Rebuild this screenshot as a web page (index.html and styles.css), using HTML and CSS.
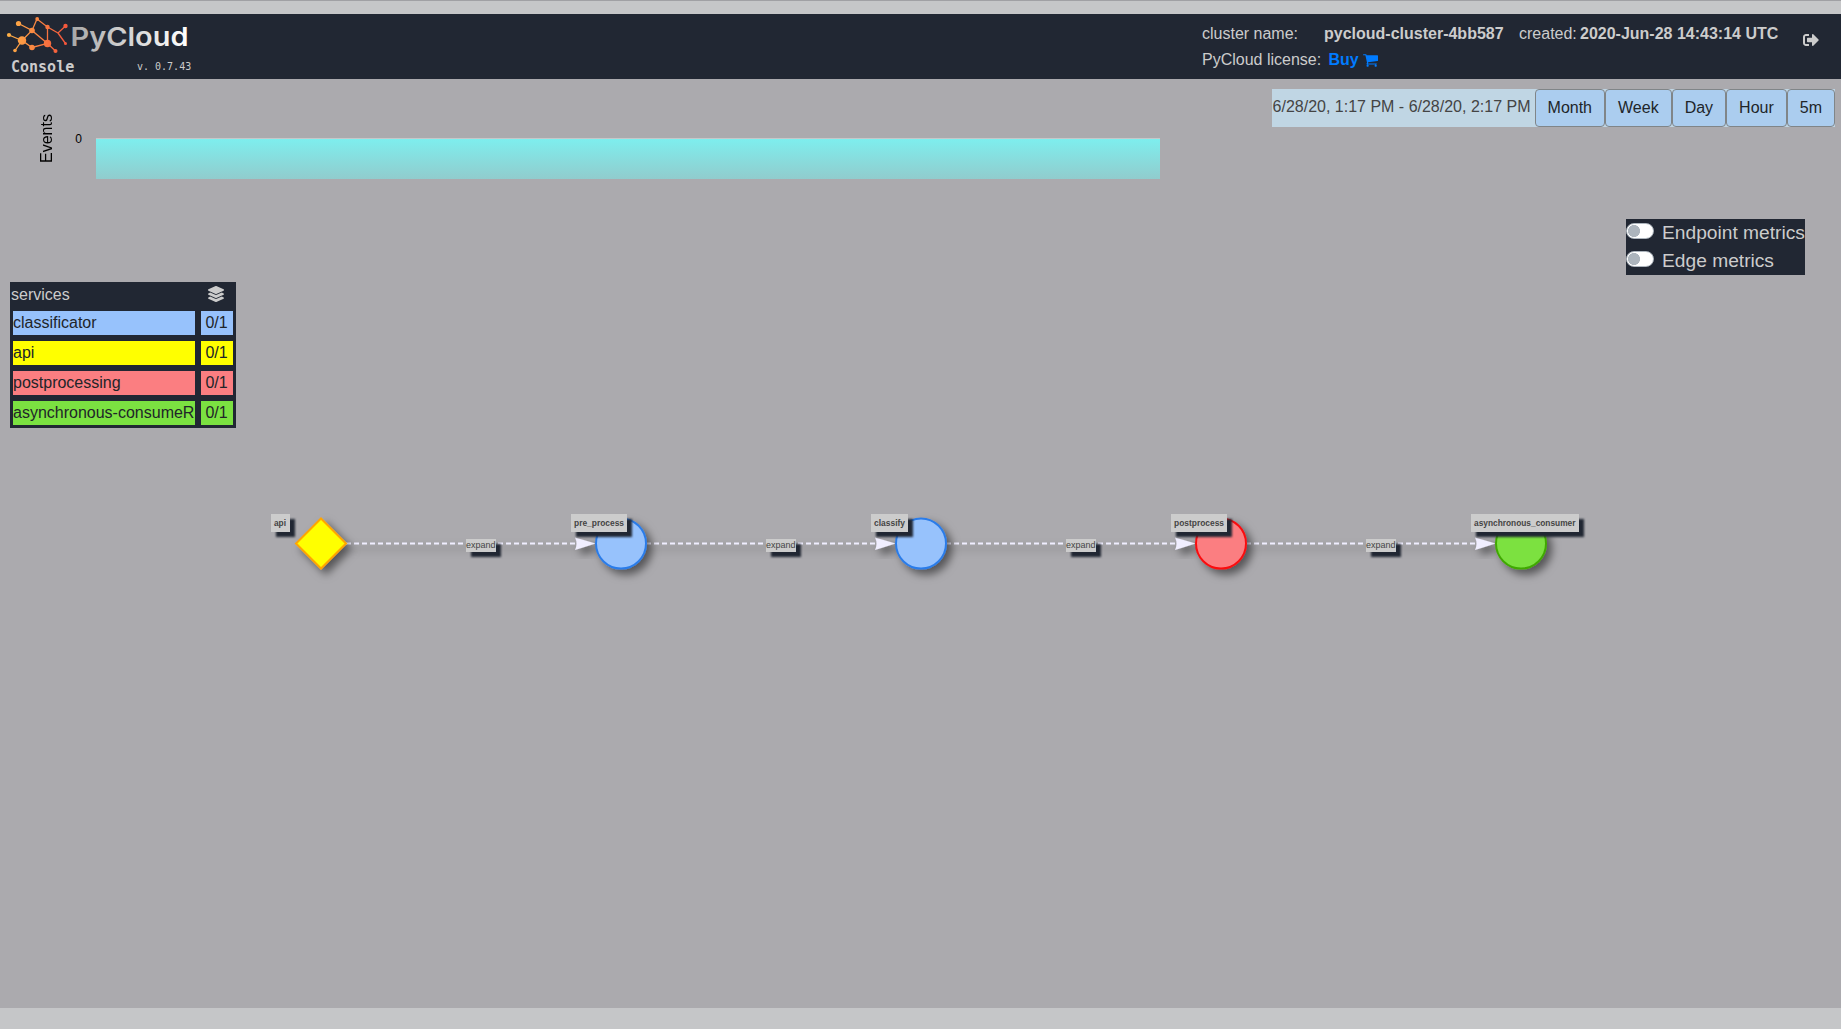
FILE: index.html
```html
<!DOCTYPE html>
<html lang="en">
<head>
<meta charset="utf-8">
<title>PyCloud Console</title>
<link rel="stylesheet" href="styles.css">
</head>
<body>
<header class="header">
  <div class="brand">
    <svg class="logo" width="190" height="40" viewBox="0 14 190 40">
      <defs>
        <linearGradient id="net" gradientUnits="userSpaceOnUse" x1="7" y1="30" x2="68" y2="38"><stop offset="0" stop-color="#ffb347"/><stop offset="1" stop-color="#f4523b"/></linearGradient>
        <linearGradient id="word" gradientUnits="userSpaceOnUse" x1="72" y1="0" x2="187" y2="0"><stop offset="0" stop-color="#a9a9a9"/><stop offset="1" stop-color="#fff"/></linearGradient>
      </defs>
      <path d="M18.5 23.5 32 30.5 22 40.5 9 35M15 50.5 22 40.5 32 47.5 47.5 43.5 32 30.5 37 19 47.5 27V43.5L55.5 51M47.5 27 58 33 65.500 26M58 33l7.500 10.500" fill="none" stroke="url(#net)" stroke-width="1.300"/>
      <g fill="url(#net)"><circle cx="18.500" cy="23.500" r="2.600"/><circle cx="9" cy="35" r="2.100"/><circle cx="15" cy="50.500" r="1.800"/><circle cx="22" cy="40.500" r="4.200"/><circle cx="32" cy="30.500" r="2.800"/><circle cx="32" cy="47.500" r="2.800"/><circle cx="37.200" cy="19" r="1.900"/><circle cx="47.500" cy="27" r="2.200"/><circle cx="47.500" cy="43.500" r="3.700"/><circle cx="55.500" cy="51" r="2"/><circle cx="65.500" cy="26" r="2.200"/><circle cx="65.500" cy="43.500" r="1.500"/></g>
      <text class="wordmark" x="70.500" y="46" textLength="118" lengthAdjust="spacingAndGlyphs" fill="url(#word)">PyCloud</text>
    </svg>
    <div class="brand-meta"><b class="console">Console</b><span class="version">v. 0.7.43</span></div>
  </div>
  <div class="account">
    <div class="info">
      <div class="info-row"><span class="cluster-label">cluster name:</span><b class="cluster-name">pycloud-cluster-4bb587</b><span class="created">created:</span><b>2020-Jun-28 14:43:14 UTC</b></div>
      <div class="info-row"><span class="license">PyCloud license:</span><b class="buy">Buy</b>
        <svg width="15" height="13" viewBox="0 128 1664 1408" fill="#007bff"><path d="M640 1408q0 52-38 90t-90 38-90-38-38-90 38-90 90-38 90 38 38 90zm896 0q0 52-38 90t-90 38-90-38-38-90 38-90 90-38 90 38 38 90zm128-1088v512q0 24-16.500 42.500t-40.500 21.500l-1044 122q13 60 13 70 0 16-24 64h920q26 0 45 19t19 45-19 45-45 19H448q-26 0-45-19t-19-45q0-11 8-31.500t16-36 21.500-40T445 1085L268 262H64q-26 0-45-19T0 198t19-45 45-19h256q16 0 28.500 6.500T368 156t13 24.500 8 26 5.500 29.500 4.500 26h1201q26 0 45 19t19 45z"/></svg>
      </div>
    </div>
    <svg class="logout" width="16" height="16" viewBox="0 0 512 512" fill="#ccc"><path d="M497 273L329 441c-15 15-41 4.500-41-17v-96H152c-13.300 0-24-10.700-24-24v-96c0-13.300 10.700-24 24-24h136V88c0-21.400 25.900-32 41-17l168 168c9.300 9.400 9.300 24.600 0 34zM192 436v-40c0-6.600-5.400-12-12-12H96c-17.700 0-32-14.300-32-32V160c0-17.700 14.300-32 32-32h84c6.600 0 12-5.400 12-12V76c0-6.600-5.400-12-12-12H96c-53 0-96 43-96 96v192c0 53 43 96 96 96h84c6.600 0 12-5.400 12-12z"/></svg>
  </div>
</header>
<main class="main">
  <section class="top">
    <div class="chart">
      <div class="axis-title">Events</div>
      <div class="tick">0</div>
      <div class="bar"></div>
    </div>
    <div class="range">
      <span class="dates">6/28/20, 1:17 PM - 6/28/20, 2:17 PM</span>
      <button class="btn">Month</button><button class="btn">Week</button><button class="btn">Day</button><button class="btn">Hour</button><button class="btn">5m</button>
    </div>
  </section>
  <section class="panels">
    <div class="services">
      <div class="services-head"><span>services</span>
        <svg class="layers" width="16" height="16" viewBox="0 0 512 512" fill="#ccc"><path d="M12.410 148.020l232.940 105.670c6.800 3.090 14.490 3.090 21.290 0l232.940-105.670c16.550-7.510 16.550-32.520 0-40.030L266.650 2.310a25.607 25.607 0 0 0-21.290 0L12.410 107.980c-16.550 7.510-16.550 32.530 0 40.040zm487.180 88.280l-58.090-26.330-161.640 73.270c-7.560 3.430-15.590 5.170-23.860 5.170s-16.290-1.740-23.860-5.170L70.510 209.970l-58.100 26.330c-16.550 7.500-16.550 32.500 0 40l232.940 105.590c6.800 3.080 14.490 3.080 21.290 0L499.590 276.300c16.550-7.500 16.550-32.500 0-40zm0 127.800l-57.870-26.230-161.860 73.370c-7.560 3.430-15.590 5.170-23.860 5.170s-16.290-1.740-23.860-5.170L70.290 337.870 12.410 364.100c-16.550 7.500-16.550 32.500 0 40l232.940 105.590c6.800 3.080 14.490 3.080 21.290 0L499.590 404.100c16.550-7.500 16.550-32.500 0-40z"/></svg>
      </div>
      <div class="service blue"><span>classificator</span><span class="count">0/1</span></div>
      <div class="service yellow"><span>api</span><span class="count">0/1</span></div>
      <div class="service red"><span>postprocessing</span><span class="count">0/1</span></div>
      <div class="service green"><span>asynchronous-consumeR</span><span class="count">0/1</span></div>
    </div>
    <div class="metrics">
      <div class="metric"><i class="switch"></i>Endpoint metrics</div>
      <div class="metric"><i class="switch"></i>Edge metrics</div>
    </div>
  </section>
  <svg class="graph" width="1841" height="120" viewBox="0 490 1841 120">
    <defs>
      <filter id="soft" x="-50%" y="-50%" width="220%" height="220%"><feDropShadow dx="5" dy="5" stdDeviation="4.500" flood-color="#000" flood-opacity=".5"/></filter>
      <filter id="hard" x="-30%" y="-50%" width="180%" height="240%" color-interpolation-filters="sRGB"><feDropShadow dx="5" dy="5" stdDeviation="1" flood-color="#212733"/></filter>
      <filter id="haze" filterUnits="userSpaceOnUse" x="320" y="510" width="1220" height="80"><feGaussianBlur stdDeviation="4.500"/></filter>
    </defs>
    <path d="M350 548.500H1500" stroke="#000" stroke-opacity=".3" stroke-width="2" filter="url(#haze)"/>
    <g stroke="#f0eeff" stroke-width="2" stroke-dasharray="5 3">
      <path d="M346 543.500H577"/><path d="M646 543.500H877"/><path d="M946 543.500H1177"/><path d="M1246 543.500H1477"/>
    </g>
    <g fill="#f0eeff" filter="url(#soft)">
      <path id="arrow" d="M595.500 543.500 575 537.500Q578 543.500 575 550Z"/>
      <use href="#arrow" x="300"/><use href="#arrow" x="600"/><use href="#arrow" x="900"/>
    </g>
    <g stroke-width="2" filter="url(#soft)">
      <path d="M321 518.500 346 543.500 321 568.500 296 543.500Z" fill="#ff0" stroke="#ffa500"/>
      <circle cx="621" cy="543.500" r="25" fill="#97c2fc" stroke="#2b7ce9"/>
      <circle cx="921" cy="543.500" r="25" fill="#97c2fc" stroke="#2b7ce9"/>
      <circle cx="1221" cy="543.500" r="25" fill="#fb7e81" stroke="#fa0a10"/>
      <circle cx="1521" cy="543.500" r="25" fill="#7be141" stroke="#41a906"/>
    </g>
    <g fill="#ccc" filter="url(#hard)">
      <path d="M271 514h19v18h-19zM571 514h56v18h-56zM871 514h37v18h-37zM1171 514h56v18h-56zM1471 514h108v18h-108z"/>
      <path d="M466 539h30v13h-30zM766 539h30v13h-30zM1066 539h30v13h-30zM1366 539h30v13h-30z"/>
    </g>
    <g class="node-label">
      <text x="274" y="526" textLength="12" lengthAdjust="spacingAndGlyphs">api</text><text x="574" y="526" textLength="50" lengthAdjust="spacingAndGlyphs">pre_process</text><text x="874" y="526" textLength="31" lengthAdjust="spacingAndGlyphs">classify</text><text x="1174" y="526" textLength="50" lengthAdjust="spacingAndGlyphs">postprocess</text><text x="1474" y="526" textLength="101.500" lengthAdjust="spacingAndGlyphs">asynchronous_consumer</text>
    </g>
    <g class="edge-label">
      <text x="466" y="548" textLength="29.500" lengthAdjust="spacingAndGlyphs">expand</text><text x="766" y="548" textLength="29.500" lengthAdjust="spacingAndGlyphs">expand</text><text x="1066" y="548" textLength="29.500" lengthAdjust="spacingAndGlyphs">expand</text><text x="1366" y="548" textLength="29.500" lengthAdjust="spacingAndGlyphs">expand</text>
    </g>
  </svg>
</main>
</body>
</html>
```
FILE: styles.css
```css
* { box-sizing: border-box; }
body {
  margin: 0;
  height: 1029px;
  padding-top: 13px;
  border-top: 1px solid #a0a0a4;
  background: #c5c6c8;
  color: #212529;
  font: 16px/24px "Liberation Sans", Arial, sans-serif;
  overflow: hidden;
}
.header {
  display: flex;
  justify-content: space-between;
  height: 65px;
  background: #212733;
  color: #ccc;
}
.logo { display: block; }
.wordmark { font: 600 26px Inter, sans-serif; }
.brand-meta {
  display: flex;
  align-items: center;
  height: 26px;
  padding-left: 11px;
  font-family: "DejaVu Sans Mono", monospace;
}
.console { width: 126px; font-size: 15px; }
.version { font-size: 10px; }
.account { display: flex; padding-right: 22px; }
.info { width: 601px; padding-top: 7px; }
.info-row { display: flex; align-items: center; height: 26px; white-space: pre; }
.cluster-label { width: 122px; }
.cluster-name { width: 195px; }
.created { width: 61px; }
.license { width: 126.500px; }
.buy { width: 34.500px; color: #007bff; }
.logout { margin-top: 18px; }
.main { height: 929px; background: #abaaae; }
.top { display: flex; justify-content: space-between; height: 140px; }
.chart { display: flex; }
.axis-title {
  width: 20px;
  height: 50px;
  margin: 34px 0 0 37px;
  line-height: 20px;
  writing-mode: vertical-rl;
  transform: rotate(180deg);
  color: #000;
}
.tick {
  width: 25px;
  margin-top: 48px;
  text-align: right;
  font-size: 12px;
  color: #000;
}
.bar {
  width: 1064px;
  height: 41px;
  margin: 59px 0 0 14px;
  border-top: 1px solid #c5c8ca;
  background: linear-gradient(#7eeeee, #91cccd);
}
.range {
  display: flex;
  height: 38px;
  margin: 10px 6px 0 0;
  background: #c0d6e4;
}
.dates { width: 263px; padding: 6px 0 0 1px; color: #444; white-space: nowrap; }
.btn {
  padding: 6px 12px;
  border: 1px solid #808588;
  border-radius: 4px;
  background: #abcdef;
  color: #212529;
  font: inherit;
}
.panels {
  display: flex;
  justify-content: space-between;
  align-items: flex-start;
  height: 271px;
  padding: 0 36px 0 10px;
}
.services {
  width: 226px;
  height: 146px;
  margin-top: 63px;
  background: #212733;
}
.services-head {
  display: flex;
  justify-content: space-between;
  align-items: center;
  height: 26px;
  padding: 0 12px 0 1px;
  color: #ccc;
}
.layers { margin-bottom: 2px; }
.service { display: flex; gap: 6px; height: 30px; padding: 3px; line-height: 24px; }
.service span { width: 182px; white-space: nowrap; }
.service .count { width: 32px; padding-right: 1px; text-align: center; }
.blue span { background: #97c2fc; }
.yellow span { background: #ff0; }
.red span { background: #fb7e81; }
.green span { background: #7be141; }
.metrics {
  width: 179px;
  height: 56px;
  background: #212733;
  color: #ccc;
  font-size: 19.200px;
  line-height: 28px;
  white-space: nowrap;
}
.metric { display: flex; gap: 8px; height: 28px; }
.switch {
  width: 28px;
  height: 16px;
  margin-top: 4px;
  border: 1px solid #adb5bd;
  border-radius: 8px;
  background: radial-gradient(circle at 7px 7px, #adb5bd 5.700px, #fff 6.300px);
}
.graph { display: block; }
.node-label { font: 700 8.800px "Liberation Sans", Arial, sans-serif; fill: #444; }
.edge-label { font: 9.200px "Liberation Sans", Arial, sans-serif; fill: #444; }
```
